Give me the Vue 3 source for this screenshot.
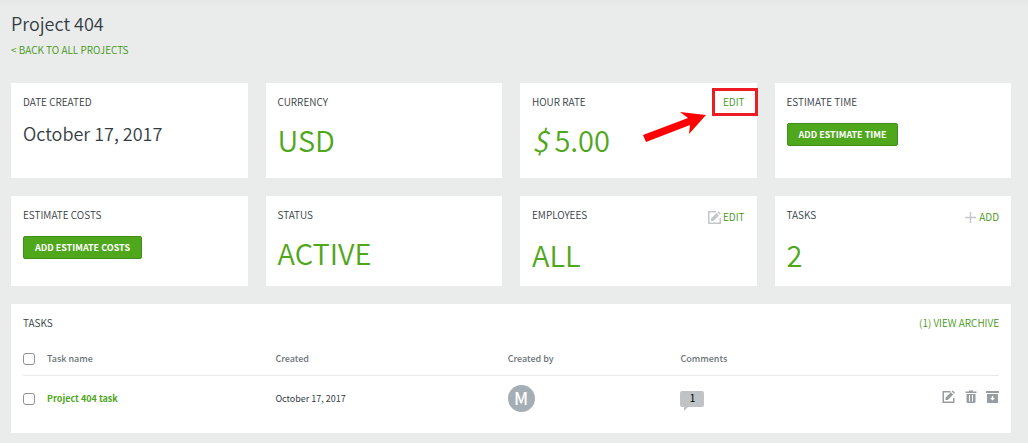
<script setup>
import { ref } from 'vue'

const tasks = ref([
  { id: 1, name: 'Project 404 task', created: 'October 17, 2017', author: 'M', comments: 1, selected: false },
])
const allSelected = ref(false)

function toggleAll() {
  tasks.value.forEach((task) => { task.selected = allSelected.value })
}
</script>

<template>
  <main class="page">
    <h1 class="title">Project 404</h1>
    <a class="link back" href="#projects">&lt; BACK TO ALL PROJECTS</a>

    <div class="cards">
      <section class="card">
        <header class="head"><h2 class="label">DATE CREATED</h2></header>
        <p class="date">October 17, 2017</p>
      </section>
      <section class="card">
        <header class="head"><h2 class="label">CURRENCY</h2></header>
        <p class="value">USD</p>
      </section>
      <section class="card">
        <header class="head">
          <h2 class="label">HOUR RATE</h2>
          <a class="link" href="#rate">EDIT</a>
        </header>
        <p class="value"><em>$</em> 5.00</p>
        <span class="highlight"></span>
        <svg class="arrow" width="64" height="32" viewBox="0 0 64 32" aria-hidden="true">
          <path d="M0 24 45 7 37 1 63 4 46 23 47 14 3 31Z" fill="#fe0000" />
        </svg>
      </section>
      <section class="card">
        <header class="head"><h2 class="label">ESTIMATE TIME</h2></header>
        <button class="button" type="button">ADD ESTIMATE TIME</button>
      </section>
      <section class="card">
        <header class="head"><h2 class="label">ESTIMATE COSTS</h2></header>
        <button class="button" type="button">ADD ESTIMATE COSTS</button>
      </section>
      <section class="card">
        <header class="head"><h2 class="label">STATUS</h2></header>
        <p class="value">ACTIVE</p>
      </section>
      <section class="card">
        <header class="head tall">
          <h2 class="label">EMPLOYEES</h2>
          <a class="link" href="#employees">
            <svg width="13" height="13" viewBox="0 0 13 13" aria-hidden="true">
              <path d="M8 .75H.75v11.5h11.5V7" fill="none" stroke="#c3c7ca" stroke-width="1.5" />
              <path d="M3 10V7.6L8.6 2l2.4 2.4L5.4 10ZM9.3 1.3 10.4.2l2.4 2.4-1.1 1.1Z" fill="#c3c7ca" />
            </svg>EDIT</a>
        </header>
        <p class="value">ALL</p>
      </section>
      <section class="card">
        <header class="head tall">
          <h2 class="label">TASKS</h2>
          <a class="link add" href="#add">
            <svg width="11" height="11" viewBox="0 0 11 11" aria-hidden="true">
              <path d="M0 5.5h11M5.5 0v11" stroke="#c3c7ca" stroke-width="1.4" />
            </svg>ADD</a>
        </header>
        <p class="value">2</p>
      </section>
    </div>

    <section class="card tasks">
      <header class="head">
        <h2 class="label">TASKS</h2>
        <a class="link" href="#archive">(1) VIEW ARCHIVE</a>
      </header>
      <table class="table">
        <thead>
          <tr>
            <th class="c-check"><input v-model="allSelected" type="checkbox" aria-label="Select all tasks" @change="toggleAll" /></th>
            <th class="c-name">Task name</th>
            <th class="c-created">Created</th>
            <th class="c-author">Created by</th>
            <th>Comments</th>
            <th class="c-actions"></th>
          </tr>
        </thead>
        <tbody>
          <tr v-for="task in tasks" :key="task.id">
            <td><input v-model="task.selected" type="checkbox" :aria-label="task.name" /></td>
            <td><a class="task-link" href="#task">{{ task.name }}</a></td>
            <td>{{ task.created }}</td>
            <td><span class="avatar">{{ task.author }}</span></td>
            <td><span class="bubble">{{ task.comments }}</span></td>
            <td>
              <div class="actions">
                <button type="button" aria-label="Edit">
                  <svg width="14" height="14" viewBox="0 0 14 14">
                    <path d="M8.5 1.75H1.25v10.5h10.5V8" fill="none" stroke="#979da1" stroke-width="1.5" />
                    <path d="M3.5 10V7.7L8.9 2.3l2.3 2.3L5.8 10ZM9.7 1.5 10.8.4l2.3 2.3L12 3.8Z" fill="#979da1" />
                  </svg>
                </button>
                <button type="button" aria-label="Delete">
                  <svg width="12" height="14" viewBox="0 0 12 14">
                    <path d="M4 1.5V.5h4v1h3.5V3H.5V1.5Z" fill="#979da1" />
                    <path d="M1.5 4h9v7.5Q10.5 13 9 13H3Q1.5 13 1.5 11.5Z" fill="#979da1" />
                    <path d="M4.5 5v6.5M7.5 5v6.5" stroke="#fff" stroke-width="1" />
                  </svg>
                </button>
                <button type="button" aria-label="Archive">
                  <svg width="13" height="14" viewBox="0 0 13 14">
                    <path d="M0 1h13v2H0ZM1 4h11v9H1Z" fill="#979da1" />
                    <path d="M5.8 6h1.4v2H9l-2.5 2.5L4 8h1.8Z" fill="#fff" />
                  </svg>
                </button>
              </div>
            </td>
          </tr>
        </tbody>
      </table>
    </section>
  </main>
</template>

<style>
body {
  margin: 0;
  background: #eaeceb;
}
</style>

<style scoped>
.page {
  box-sizing: border-box;
  padding: 11px 17px 10px 11px;
  background: linear-gradient(#e5e7e6, #eaeceb 6px);
  color: #343d44;
  font-family: "Noto Sans CJK SC", "Noto Sans", sans-serif;
  font-size: 10px;
  font-weight: 350;
  line-height: 16px;
}
h1, h2, p { margin: 0; font-weight: 350; }
.title { font-size: 18px; line-height: 24px; }
.link { color: #3f9614; text-decoration: none; }
.back { display: block; width: max-content; margin: 7px 0 25px; }
.cards {
  display: grid;
  grid-template-columns: repeat(4, 1fr);
  grid-template-rows: 95px 90px;
  gap: 18px;
}
.card {
  position: relative;
  box-sizing: border-box;
  padding: 11px 12px;
  background: #fff;
}
.head {
  display: flex;
  justify-content: space-between;
  margin-bottom: 11px;
}
.head .link { display: flex; align-items: center; gap: 2px; }
.head .add { gap: 3px; }
.tall .link { padding-top: 2px; }
.label { font-size: 10px; line-height: 16px; }
.date { font-size: 18px; line-height: 24px; }
.value { color: #4fa71c; font-size: 29px; line-height: 36px; }
.button {
  display: block;
  height: 23px;
  margin-top: 13px;
  padding: 0 11px;
  border: 1px solid #418d1c;
  border-radius: 2px;
  background: #4fa71c;
  color: #fff;
  font: 700 9px/16px "Noto Sans CJK SC", "Noto Sans", sans-serif;
}
.highlight {
  position: absolute;
  top: 5px;
  right: -1px;
  box-sizing: border-box;
  width: 46px;
  height: 28px;
  border: 3px solid #ed1c24;
}
.arrow { position: absolute; top: 28px; right: 50px; }
.tasks { margin-top: 18px; padding-bottom: 12px; }
.table {
  width: 100%;
  border-collapse: collapse;
  table-layout: fixed;
  font-size: 9px;
}
.table th, .table td { padding: 0; text-align: left; }
.table th { height: 33px; color: #6b7479; font-weight: 500; border-bottom: 1px solid #e8e9e9; }
.table td { height: 45px; font-weight: 400; }
.c-check { width: 24px; }
.c-name { width: 23.4%; }
.c-created { width: 23.8%; }
.c-author { width: 17.7%; }
.c-actions { width: 80px; }
input {
  display: block;
  appearance: none;
  width: 12px;
  height: 12px;
  margin: 0;
  border: 1px solid #8d9297;
  border-radius: 3px;
  background: #fff;
}
input:checked { background: #4fa71c; }
.task-link { color: #4fa71c; font-weight: 700; text-decoration: none; }
.avatar {
  display: block;
  width: 27px;
  height: 27px;
  border-radius: 50%;
  background: #a5adb5;
  color: #fff;
  font-size: 17px;
  font-weight: 500;
  line-height: 25px;
  text-align: center;
}
.bubble {
  position: relative;
  display: block;
  width: 24px;
  height: 16px;
  border-radius: 2px;
  background: #bfc3c6;
  color: #000;
  font-size: 10px;
  line-height: 14px;
  text-align: center;
}
.bubble::after {
  content: "";
  position: absolute;
  top: 16px;
  left: 4px;
  border-top: 4px solid #bfc3c6;
  border-right: 4px solid transparent;
}
.actions { display: flex; justify-content: flex-end; gap: 9px; padding-bottom: 3px; }
.actions button { display: block; padding: 0; border: 0; background: none; }
.actions svg { display: block; }
</style>
